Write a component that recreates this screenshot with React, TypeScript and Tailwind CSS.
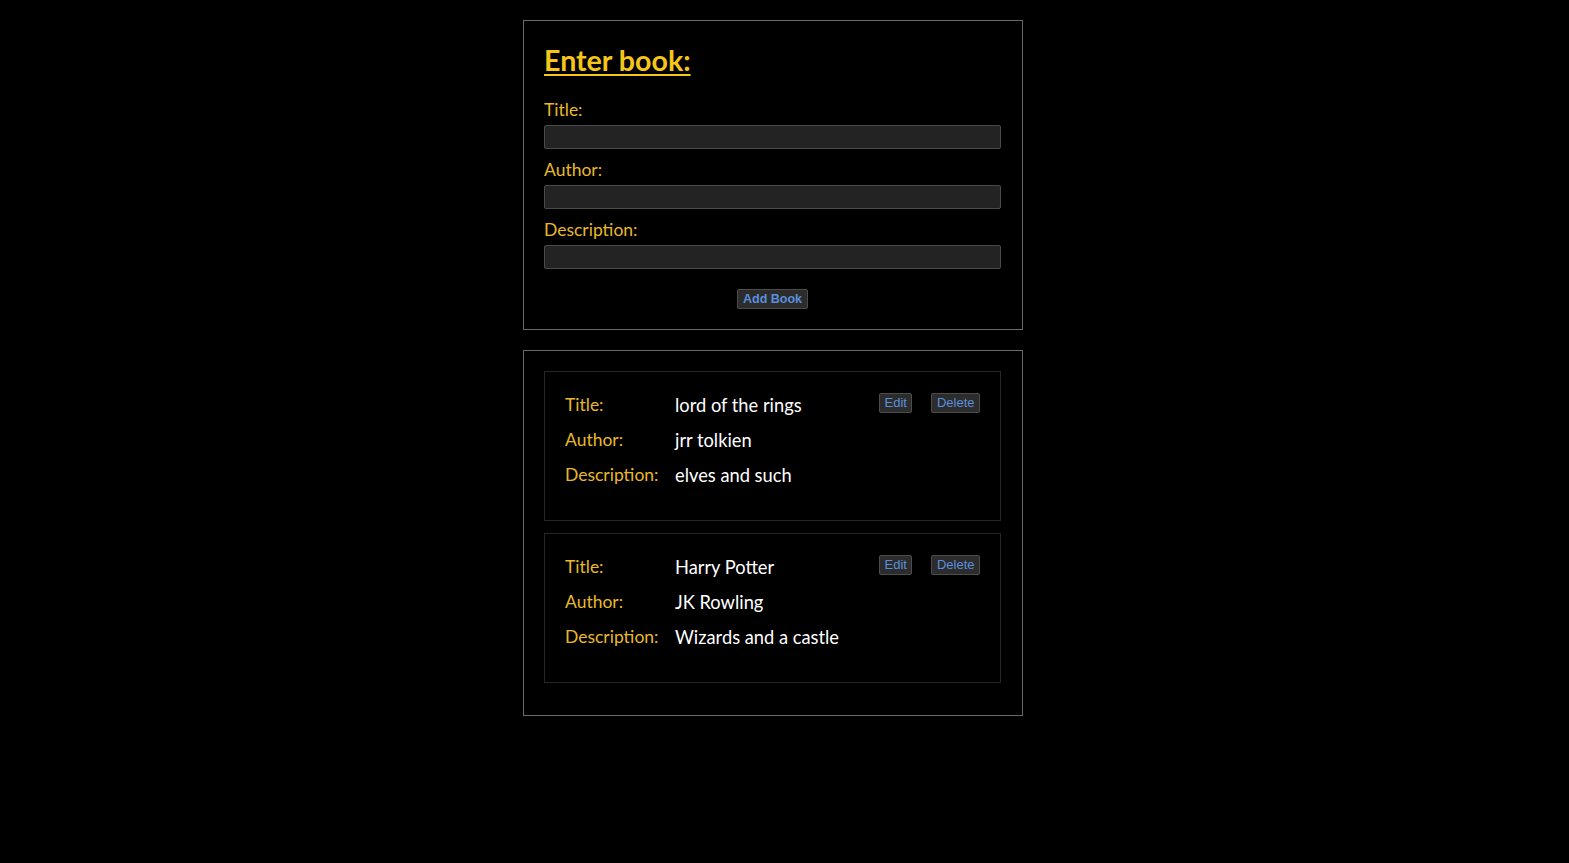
const books = [
  { title: 'lord of the rings', author: 'jrr tolkien', description: 'elves and such' },
  { title: 'Harry Potter', author: 'JK Rowling', description: 'Wizards and a castle' },
];

const Field = ({ label }: { label: string }) => (
  <div className="flex flex-col">
    <label className="h-[24px] leading-[26px] text-[17.5px] text-[#e8b92a]">{label}</label>
    <input className="mt-[4px] h-[24px] w-full rounded-[2px] border border-[#4a4a4a] bg-[#232323] px-2 text-white outline-none" />
  </div>
);

const Btn = ({ children, bold }: { children: string; bold?: boolean }) => (
  <button
    className={`h-[20px] rounded-[2px] border border-[#4c4c4c] bg-[#2c2c2c] leading-[18px] text-[#5b8fdc] ${bold ? 'px-[5px] font-bold text-[12.5px]' : 'px-[4.5px] text-[13px]'}`}
    style={{ fontFamily: '"Liberation Sans", Arial, sans-serif' }}
  >
    {children}
  </button>
);

export default function App() {
  return (
    <div className="min-h-screen bg-black pt-[20px] pb-10" style={{ fontFamily: 'Lato, "Open Sans", sans-serif' }}>
      <div className="ml-[523px] w-[500px]">
        {/* Form */}
        <div className="border border-[#6a6a6a] pl-[20px] pr-[21px] pt-[23px] pb-[20px]">
          <h1 className="h-[32px] text-[28.6px] font-bold leading-[32px] text-[#f5c518] underline decoration-2 underline-offset-[3px]">
            Enter book:
          </h1>
          <div className="mt-[21px] flex flex-col gap-[8px]">
            <Field label="Title:" />
            <Field label="Author:" />
            <Field label="Description:" />
          </div>
          <div className="mt-[20px] flex justify-center">
            <Btn bold>Add Book</Btn>
          </div>
        </div>

        {/* List */}
        <div className="mt-[20px] flex flex-col gap-[12px] border border-[#6a6a6a] pl-[20px] pr-[21px] pt-[20px] pb-[32px]">
          {books.map((b) => (
            <div key={b.title} className="border border-[#262626] pl-[20px] pr-[20px] pt-[16px] pb-[27px]">
              <div className="flex h-[35px] items-center">
                <span className="w-[110px] text-[17.5px] text-[#e8b92a]">Title:</span>
                <span className="flex-1 text-[18.3px] text-white">{b.title}</span>
                <div className="flex gap-[19px] self-start pt-[5px]">
                  <Btn>Edit</Btn>
                  <Btn>Delete</Btn>
                </div>
              </div>
              <div className="flex h-[35px] items-center">
                <span className="w-[110px] text-[17.5px] text-[#e8b92a]">Author:</span>
                <span className="text-[18.3px] text-white">{b.author}</span>
              </div>
              <div className="flex h-[35px] items-center">
                <span className="w-[110px] text-[17.5px] text-[#e8b92a]">Description:</span>
                <span className="text-[18.3px] text-white">{b.description}</span>
              </div>
            </div>
          ))}
        </div>
      </div>
    </div>
  );
}
